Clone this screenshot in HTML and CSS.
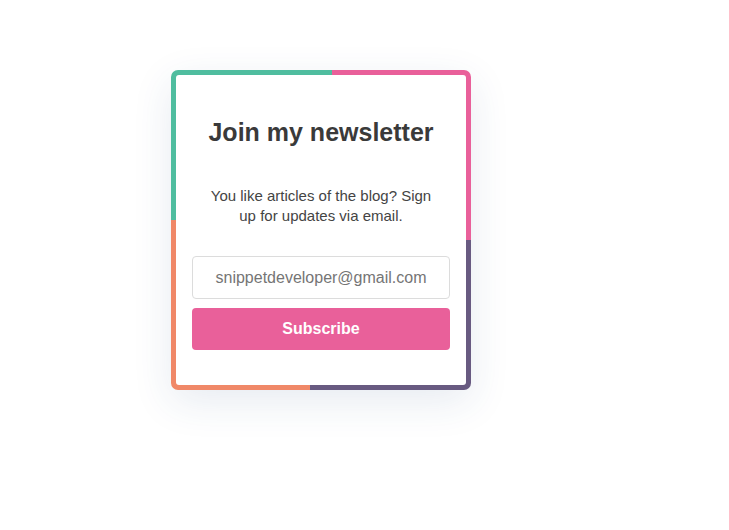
FILE: index.html
```html
<!DOCTYPE html>
<html lang="en">
<head>
<meta charset="utf-8">
<title>Newsletter</title>
<link rel="stylesheet" href="styles.css">
</head>
<body>
<main class="page">
  <div class="card">
    <form class="card-inner">
      <h1 class="title">Join my newsletter</h1>
      <p class="text">You like articles of the blog? Sign up for updates via email.</p>
      <input class="email" type="email" placeholder="snippetdeveloper@gmail.com">
      <button class="btn" type="button">Subscribe</button>
    </form>
  </div>
</main>
</body>
</html>
```
FILE: styles.css
```css
* { box-sizing: border-box; }
html, body { margin: 0; padding: 0; background: #fff; }
body { font-family: "Liberation Sans", Arial, sans-serif; }
.page {
  display: flex;
  align-items: flex-start;
  min-height: 100vh;
  padding: 70px 0 0 171px;
}
.card {
  width: 300px;
  height: 320px;
  padding: 5px;
  border-radius: 7px;
  background: conic-gradient(from 4deg at 50% 50%,
    #e9609a 0 25%, #685a81 25% 50%, #f08868 50% 75%, #4fbd9f 75% 100%);
  box-shadow: 0 12px 40px rgba(40, 70, 130, 0.11);
}
.card-inner {
  height: 100%;
  background: #fff;
  border-radius: 3px;
  padding: 42px 16px 0;
  display: flex;
  flex-direction: column;
  align-items: stretch;
}
.title {
  margin: 0;
  font-size: 25px;
  line-height: 30px;
  font-weight: 700;
  color: #3a3a3a;
  text-align: center;
}
.text {
  margin: 39px 13px 0;
  font-size: 15px;
  line-height: 20px;
  color: #444;
  text-align: center;
}
.email {
  margin-top: 30px;
  height: 43px;
  border: 1px solid #dcdcdc;
  border-radius: 4px;
  font-family: "Liberation Sans", Arial, sans-serif;
  font-size: 16px;
  text-align: center;
  color: #555;
  background: #fff;
  outline: none;
}
.email::placeholder { color: #757575; }
.btn {
  margin-top: 9px;
  height: 42px;
  border: 0;
  border-radius: 4px;
  background: #e9609a;
  color: #fff;
  font-family: "Liberation Sans", Arial, sans-serif;
  font-size: 16px;
  font-weight: 700;
}
```
